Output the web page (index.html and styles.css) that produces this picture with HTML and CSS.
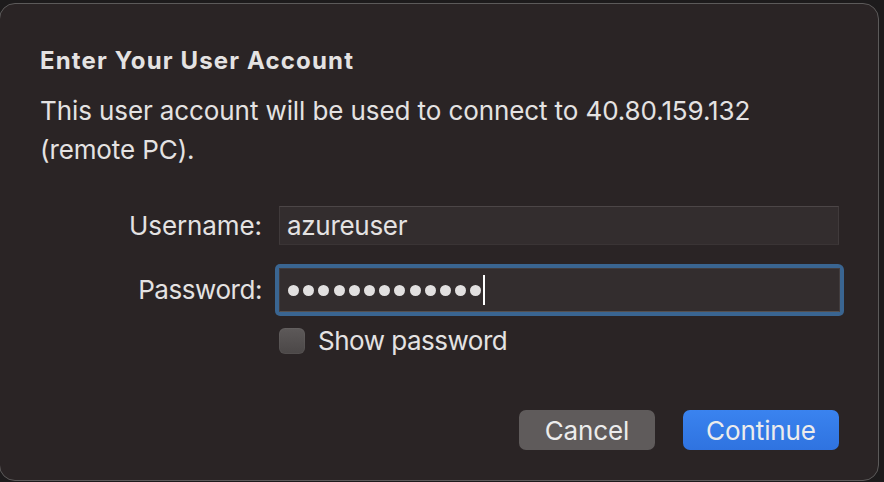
FILE: index.html
```html
<!DOCTYPE html>
<html>
<head>
<meta charset="utf-8">
<link rel="stylesheet" href="styles.css">
</head>
<body>
<div class="window">
  <h1 class="title">Enter Your User Account</h1>
  <p class="desc">This user account will be used to connect to 40.80.159.132<br>(remote PC).</p>
  <div class="form">
    <label class="label">Username:</label>
    <div class="field">azureuser</div>
    <label class="label label-pw">Password:</label>
    <div class="focus">
      <div class="field field-pw">
        <span class="dot"></span><span class="dot"></span><span class="dot"></span><span class="dot"></span><span class="dot"></span><span class="dot"></span><span class="dot"></span><span class="dot"></span><span class="dot"></span><span class="dot"></span><span class="dot"></span><span class="dot"></span><span class="dot"></span><span class="caret"></span>
      </div>
    </div>
    <div></div>
    <div class="check-row"><span class="checkbox"></span><span class="check-label">Show password</span></div>
  </div>
  <div class="buttons">
    <button class="btn btn-cancel">Cancel</button>
    <button class="btn btn-continue">Continue</button>
  </div>
</div>
</body>
</html>
```
FILE: styles.css
```css
html, body {
  margin: 0;
  padding: 0;
  background: #1d1b1c;
  width: 884px;
  height: 482px;
  overflow: hidden;
}
body {
  font-family: Inter, "Noto Sans", sans-serif;
  color: #e4e2e2;
}
.window {
  box-sizing: border-box;
  width: 880px;
  height: 478px;
  margin: 3px 0 0 -1px;
  background: #2a2425;
  border: 1px solid #5c5a5a;
  border-radius: 16px;
  padding: 0 39px 0 40px;
  display: flex;
  flex-direction: column;
}
.title {
  margin: 42px 0 0 0;
  font-size: 24px;
  font-weight: 700;
  line-height: 30px;
  letter-spacing: 1.15px;
}
.desc {
  margin: 15px 0 0 0;
  font-size: 26px;
  line-height: 39px;
  letter-spacing: -0.1px;
}
.form {
  margin-top: 37px;
  display: grid;
  grid-template-columns: 222px 560px;
  column-gap: 17px;
  row-gap: 19px;
  align-items: center;
}
.label {
  font-size: 26px;
  text-align: right;
  line-height: 30px;
  letter-spacing: -0.1px;
}
.label-pw {
  letter-spacing: -0.45px;
}
.field {
  box-sizing: border-box;
  height: 39px;
  background: #332d2e;
  border-top: 1px solid #4c4647;
  border-left: 1px solid #403a3b;
  border-right: 1px solid #403a3b;
  border-bottom: 1px solid #3a3435;
  font-size: 26px;
  line-height: 37px;
  padding-left: 7px;
  letter-spacing: -0.3px;
}
.focus {
  margin: 0 -5px 0 -4px;
  padding: 4px;
  background: #3a6591;
  border-radius: 5px;
  border-top-right-radius: 6px;
}
.field-pw {
  display: flex;
  align-items: center;
  gap: 4.2px;
  height: 44px;
  padding-left: 8px;
  border-color: #423c3d;
  border-bottom-color: #55504f;
}
.dot {
  width: 11px;
  height: 11px;
  border-radius: 50%;
  background: #e2e0e0;
}
.caret {
  width: 2px;
  height: 30px;
  background: #ffffff;
  margin-left: -2px;
}
.check-row {
  display: flex;
  align-items: center;
  gap: 13px;
  margin-top: -9px;
}
.checkbox {
  width: 26px;
  height: 26px;
  border-radius: 6px;
  background: linear-gradient(#5d5959, #4b4747);
  box-shadow: inset 0 0 0 1px rgba(255,255,255,0.04);
}
.check-label {
  font-size: 26px;
  line-height: 30px;
  letter-spacing: -0.5px;
}
.buttons {
  margin-top: auto;
  margin-bottom: 30px;
  display: flex;
  justify-content: flex-end;
  gap: 28px;
}
.btn {
  font-family: Inter, "Noto Sans", sans-serif;
  font-size: 26px;
  color: #ececec;
  height: 40px;
  border: none;
  border-radius: 7px;
  padding: 0;
  letter-spacing: -0.1px;
}
.btn-cancel {
  width: 136px;
  background: #5f5b5b;
}
.btn-continue {
  width: 156px;
  background: linear-gradient(#3a83ef, #2f73e0);
}
```
